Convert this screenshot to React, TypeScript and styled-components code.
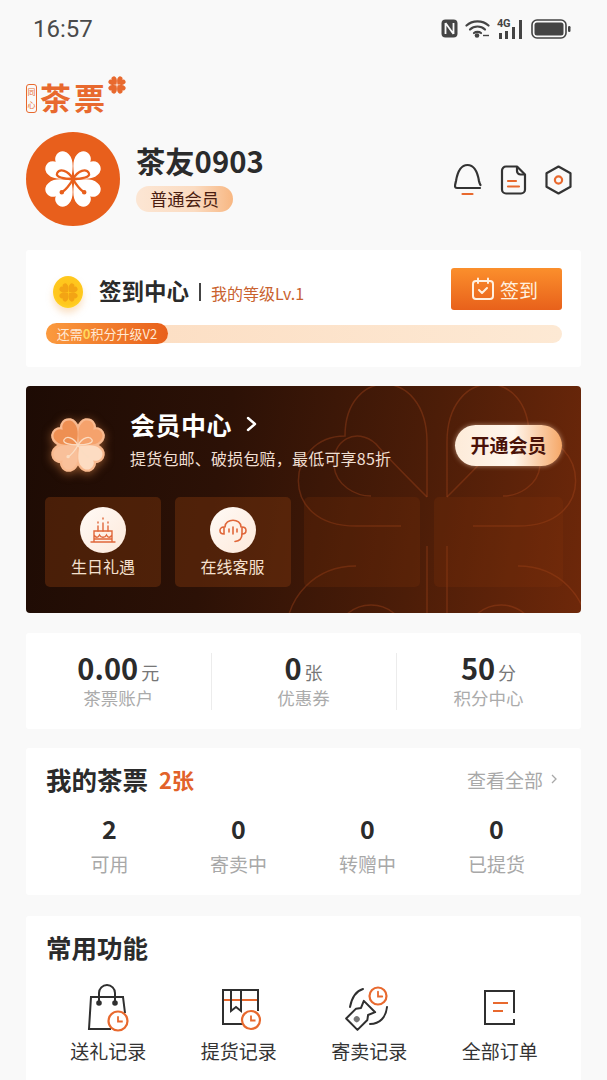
import React from "react";
import styled, { createGlobalStyle } from "styled-components";

const GlobalStyle = createGlobalStyle`
  html, body {
    margin: 0;
    padding: 0;
    background: #f9f9f9;
  }
  #root {
    height: 1080px;
    overflow: hidden;
  }
`;

const Page = styled.div`
  width: 607px;
  height: 1080px;
  overflow: hidden;
  background: #f9f9f9;
  font-family: "Noto Sans CJK SC", "Noto Sans", sans-serif;
  color: #2b2b2b;
`;

const StatusBar = styled.div`
  height: 58px;
  padding: 0 36px 0 33px;
  display: flex;
  align-items: center;
  justify-content: space-between;
`;

const Time = styled.span`
  font-family: Roboto, sans-serif;
  font-size: 24px;
  color: #4a4a4a;
`;

const StatusIcons = styled.div`
  display: flex;
  align-items: center;
  gap: 7px;
  color: #444;
  margin-top: -1px;
`;

const NetLabel = styled.span`
  position: absolute;
  left: 0;
  top: -1px;
  font-family: Roboto, sans-serif;
  font-size: 11px;
  font-weight: 700;
  line-height: 11px;
  letter-spacing: -0.3px;
  color: #444;
`;

const NetBox = styled.div`
  position: relative;
  width: 27px;
  height: 20px;
`;

const Content = styled.div`
  padding: 0 26px;
`;

const LogoRow = styled.div`
  margin-top: 18px;
  height: 38px;
  display: flex;
  align-items: flex-end;
  color: #e8692e;
`;

const LogoSeal = styled.span`
  width: 11px;
  height: 29px;
  margin-bottom: 1px;
  border: 1px solid #e8692e;
  border-radius: 3px;
  box-sizing: border-box;
  font-size: 8px;
  line-height: 13px;
  text-align: center;
  overflow: hidden;
`;

const LogoText = styled.span`
  margin-left: 3px;
  font-size: 31px;
  line-height: 34px;
  font-weight: 700;
  letter-spacing: 3px;
`;

const LogoLeaf = styled.div`
  align-self: flex-start;
  margin-left: 0;
  line-height: 0;
`;

const Profile = styled.div`
  margin-top: 18px;
  height: 94px;
  display: flex;
  align-items: center;
`;

const Avatar = styled.div`
  width: 94px;
  height: 94px;
  border-radius: 50%;
  background: #e85f1c;
  display: flex;
  align-items: center;
  justify-content: center;
  flex-shrink: 0;
`;

const ProfileInfo = styled.div`
  margin-left: 16px;
  padding-bottom: 6.5px;
  display: flex;
  flex-direction: column;
  align-items: flex-start;
  flex: 1;
`;

const UserName = styled.div`
  font-size: 29.3px;
  line-height: 40px;
  font-weight: 700;
  color: #2b2b2b;
`;

const LevelBadge = styled.div`
  margin-top: 6.5px;
  width: 97px;
  height: 26px;
  border-radius: 13px;
  background: linear-gradient(90deg, #fce6d4 0%, #fbdcc2 60%, #f8b782 100%);
  font-size: 17.3px;
  line-height: 26px;
  text-align: center;
  color: #4a1d10;
`;

const ProfileActions = styled.div`
  display: flex;
  align-items: center;
  gap: 18px;
  margin-right: 9px;
  margin-top: 2px;
`;

const Card = styled.section`
  background: #fff;
  border-radius: 3px;
`;

const CheckinCard = styled(Card)`
  margin-top: 24px;
  height: 117px;
  padding: 18px 19px 0 20px;
  box-sizing: border-box;
  position: relative;
`;

const CheckinTop = styled.div`
  display: flex;
  align-items: center;
  height: 42px;
`;

const Coin = styled.div`
  width: 30px;
  height: 32px;
  margin-left: 7px;
  margin-top: 6px;
  border-radius: 50%;
  background: radial-gradient(circle at 50% 45%, #ffc21a 0%, #ffc81e 60%, #ffe13a 100%);
  box-shadow: 0 5px 7px rgba(240, 170, 90, 0.35);
  display: flex;
  align-items: center;
  justify-content: center;
`;

const CheckinTitle = styled.span`
  margin-left: 16px;
  margin-top: 2px;
  font-size: 22.5px;
  font-weight: 700;
  color: #2b2b2b;
`;

const Divider = styled.span`
  width: 2px;
  height: 18px;
  margin: 6px 10px 0;
  background: #444;
`;

const LevelText = styled.span`
  margin-top: 7px;
  font-size: 16px;
  color: #c9622f;
`;

const CheckinButton = styled.button`
  margin-left: auto;
  width: 111px;
  height: 42px;
  border: 0;
  padding: 0 4px 0 0;
  border-radius: 3px;
  background: linear-gradient(180deg, #fb8f2c 0%, #e8611b 100%);
  color: #fff0df;
  font-family: inherit;
  font-size: 19px;
  display: flex;
  align-items: center;
  justify-content: center;
  gap: 5px;
`;

const Progress = styled.div`
  margin-top: 15px;
  height: 18px;
  border-radius: 9px;
  background: linear-gradient(90deg, #fcdcc0 0%, #fde9d4 100%);
  position: relative;
`;

const ProgressFill = styled.div`
  position: absolute;
  left: 0;
  top: -2px;
  width: 122px;
  height: 21px;
  border-radius: 11px;
  background: linear-gradient(90deg, #fb9a3e 0%, #e8601b 100%);
  color: #ffe9d4;
  font-size: 13px;
  line-height: 21px;
  text-align: center;
  white-space: nowrap;
`;

const ProgressNum = styled.b`
  color: #ffd75a;
`;

const MemberCard = styled.section`
  margin-top: 19px;
  height: 227px;
  position: relative;
  overflow: hidden;
  border-radius: 4px;
  background: linear-gradient(100deg, #1d0b04 0%, #2c1106 35%, #4c1d08 70%, #6e280a 100%);
  color: #fff;
`;

const Watermark = styled.svg`
  position: absolute;
  left: 230px;
  top: -30px;
`;

const MemberHead = styled.div`
  position: relative;
  height: 111px;
  display: flex;
  align-items: flex-start;
  padding: 30px 19px 0 24px;
  box-sizing: border-box;
`;

const MemberBadge = styled.div`
  width: 56px;
  height: 58px;
  filter: drop-shadow(0 2px 5px rgba(245, 150, 80, 0.5));
`;

const MemberInfo = styled.div`
  margin-left: 24px;
  flex: 1;
`;

const MemberTitle = styled.div`
  display: flex;
  align-items: center;
  gap: 13px;
  font-size: 25px;
  line-height: 24px;
  font-weight: 700;
  letter-spacing: 0.5px;
  margin-top: -4px;
`;

const MemberDesc = styled.div`
  margin-top: 11px;
  font-size: 16px;
  line-height: 22px;
  letter-spacing: 0.2px;
  white-space: nowrap;
  color: #f0dfd2;
`;

const OpenButton = styled.div`
  position: absolute;
  left: 429px;
  top: 39px;
  width: 107px;
  height: 41px;
  border-radius: 21px;
  background: linear-gradient(90deg, #fdebd9 0%, #fff6ec 55%, #f6a868 100%);
  box-shadow: 0 0 5px rgba(255, 220, 190, 0.55);
  color: #4a1208;
  font-size: 19px;
  font-weight: 700;
  line-height: 40px;
  text-align: center;
`;

const Tiles = styled.div`
  position: relative;
  display: grid;
  grid-template-columns: 116px 116px 116px 129px;
  column-gap: 13.5px;
  padding-left: 19px;
`;

const Tile = styled.div<{ $faded?: boolean }>`
  height: 90px;
  border-radius: 5px;
  background: ${(p) => (p.$faded ? "rgba(140, 55, 10, 0.2)" : "rgba(130, 58, 14, 0.42)")};
  display: flex;
  flex-direction: column;
  align-items: center;
  padding-top: 10px;
  box-sizing: border-box;
`;

const TileIcon = styled.div`
  width: 46px;
  height: 46px;
  border-radius: 50%;
  background: linear-gradient(135deg, #fffaf6, #fde9da);
  display: flex;
  align-items: center;
  justify-content: center;
`;

const TileLabel = styled.div`
  margin-top: 2px;
  font-size: 16px;
  line-height: 22px;
  color: #f5e0cf;
`;

const StatsCard = styled(Card)`
  margin-top: 20px;
  height: 96px;
  display: grid;
  grid-template-columns: 184.5px 185px 185px;
  align-items: center;
`;

const StatCell = styled.div<{ $divided?: boolean }>`
  height: 57px;
  display: flex;
  flex-direction: column;
  align-items: center;
  border-left: ${(p) => (p.$divided ? "1px solid #ececec" : "0")};
  box-sizing: border-box;
`;

const StatValue = styled.div`
  font-size: 29px;
  line-height: 28px;
  font-weight: 700;
  color: #2b2b2b;
`;

const StatUnit = styled.span`
  margin-left: 3px;
  font-size: 18px;
  line-height: 18px;
  font-weight: 400;
  color: #777;
`;

const StatLabel = styled.div`
  margin-top: 5px;
  font-size: 17.5px;
  line-height: 24px;
  color: #ababab;
`;

const TicketCard = styled(Card)`
  margin-top: 19px;
  height: 147px;
  padding: 14px 20px 0;
  box-sizing: border-box;
`;

const CardHead = styled.div`
  display: flex;
  align-items: center;
  height: 34px;
`;

const CardTitle = styled.h2`
  margin: 0;
  font-size: 25.5px;
  font-weight: 700;
  line-height: 34px;
  color: #2b2b2b;
`;

const TicketCount = styled.span`
  margin-left: 11px;
  font-size: 22px;
  font-weight: 700;
  color: #e2622a;
`;

const SeeAll = styled.span`
  margin-left: auto;
  margin-right: 4px;
  font-size: 19px;
  color: #a8a8a8;
  display: flex;
  align-items: center;
  gap: 8px;
`;

const TicketGrid = styled.div`
  margin-top: 16px;
  margin-left: -1px;
  display: grid;
  grid-template-columns: repeat(4, 129px);
`;

const TicketCell = styled.div`
  display: flex;
  flex-direction: column;
  align-items: center;
`;

const TicketNum = styled.div`
  font-size: 25px;
  line-height: 32px;
  font-weight: 700;
  color: #2b2b2b;
`;

const TicketLabel = styled.div`
  margin-top: 7px;
  font-size: 19px;
  line-height: 26px;
  color: #a8a8a8;
`;

const ToolCard = styled(Card)`
  margin-top: 21px;
  height: 190px;
  padding: 14px 20px 0;
  box-sizing: border-box;
`;

const ToolGrid = styled.div`
  margin-top: 19px;
  margin-left: -3px;
  display: grid;
  grid-template-columns: repeat(4, 130.5px);
`;

const ToolCell = styled.div`
  display: flex;
  flex-direction: column;
  align-items: center;
`;

const ToolLabel = styled.div`
  margin-top: 4px;
  font-size: 19px;
  line-height: 28px;
  color: #333;
`;

const HEART = "M0 0C-4-4-22-14-22-28A11.5 11.5 0 0 1 0-34A11.5 11.5 0 0 1 22-28C22-14 4-4 0 0Z";

const ANGLES = [45, 135, 225, 315];

type PetalProps = { fills: string[]; stroke?: string; strokeWidth?: number };

const Petals = ({ fills, stroke, strokeWidth }: PetalProps) => (
  <>
    {ANGLES.map((a, i) => (
      <path
        key={a}
        d={HEART}
        fill={fills[i % fills.length]}
        stroke={stroke}
        strokeWidth={strokeWidth}
        strokeLinejoin="round"
        transform={`translate(50 50) rotate(${a}) translate(0 -3)`}
      />
    ))}
  </>
);

const Bow = ({ color, width }: { color: string; width: number }) => (
  <g fill="none" stroke={color} strokeWidth={width} strokeLinecap="round">
    <path d="M50 50C42 36 30 34 26 41C23 47 36 50 50 50C64 50 77 47 74 41C70 34 58 36 50 50Z" />
    <path d="M50 50C46 58 38 68 33 70M50 50C54 58 62 68 67 70" />
    <circle cx="33" cy="70" r="1.8" fill={color} />
    <circle cx="67" cy="70" r="1.8" fill={color} />
  </g>
);

const AvatarFlower = () => (
  <svg width="58" height="58" viewBox="6 6 88 88">
    <Petals fills={["#fff"]} />
    <Bow color="#e85f1c" width={3.4} />
  </svg>
);

const SmallLeaf = () => (
  <svg width="18" height="18" viewBox="6 6 88 88">
    <Petals fills={["#e8692e"]} />
  </svg>
);

const CoinLeaf = () => (
  <svg width="19" height="19" viewBox="6 6 88 88">
    <Petals fills={["#f3a414"]} />
  </svg>
);

const MemberFlower = () => (
  <svg width="56" height="58" viewBox="2 2 96 96">
    <circle cx="50" cy="50" r="32" fill="#f5a877" />
    <Petals fills={["#f8b98f"]} stroke="#f8b98f" strokeWidth={8} />
    <Petals fills={["#f5a26c", "#fddcc2", "#f9c09a", "#ee8f52"]} />
    <Bow color="#fbdcc2" width={2.2} />
  </svg>
);

const NfcIcon = () => (
  <svg width="17" height="19" viewBox="0 0 17 19">
    <rect x="0.5" y="0.5" width="16" height="18" rx="4" fill="#444" />
    <path d="M4.5 4V15M12.5 4V15M4.5 4L12.5 15" stroke="#f9f9f9" strokeWidth="1.8" fill="none" />
  </svg>
);

const WifiIcon = () => (
  <svg width="25" height="19" viewBox="0 0 25 19">
    <g fill="none" stroke="#444" strokeWidth="2.2" strokeLinecap="round">
      <path d="M1.5 6.5C7.5 1 17.5 1 23.5 6.5" />
      <path d="M5 10.5C9 6.5 16 6.5 20 10.5" />
      <path d="M9 14C10.8 12.5 14.2 12.5 16 14" />
    </g>
    <circle cx="12" cy="16.5" r="2.3" fill="#444" />
    <path d="M18 16.5H24" stroke="#444" strokeWidth="1.4" />
  </svg>
);

const SignalIcon = () => (
  <NetBox>
    <NetLabel>4G</NetLabel>
    <svg width="27" height="20" viewBox="0 0 27 20">
      <g fill="#444">
        <rect x="2" y="14" width="3" height="6" />
        <rect x="8" y="12" width="3" height="8" />
        <rect x="15" y="8" width="3" height="12" />
        <rect x="22" y="1" width="3" height="19" />
      </g>
    </svg>
  </NetBox>
);

const BatteryIcon = () => (
  <svg width="40" height="20" viewBox="0 0 40 20">
    <rect x="1" y="1" width="34" height="18" rx="5" fill="none" stroke="#444" strokeWidth="1.6" />
    <rect x="3.5" y="3.5" width="29" height="13" rx="2.5" fill="#444" />
    <rect x="37" y="7" width="2.5" height="6" rx="1.2" fill="#444" />
  </svg>
);

const BellIcon = () => (
  <svg width="28" height="34" viewBox="0 0 28 34" fill="none">
    <path d="M3 25C0 25 1 22 2 18C3 12 6 2 13.5 2C21 2 24 12 25 18C25.4 20 26 21 26.5 22M26 25H3" stroke="#333" strokeWidth="2.2" strokeLinecap="round" strokeLinejoin="round" />
    <path d="M8.5 31H18.5" stroke="#e8692e" strokeWidth="2.2" strokeLinecap="round" />
  </svg>
);

const DocIcon = () => (
  <svg width="27" height="30" viewBox="0 0 27 30" fill="none">
    <path d="M17 1.5H6A4 4 0 0 0 2 5.5V24.5A4 4 0 0 0 6 28.5H21A4 4 0 0 0 25 24.5V9.5Z" stroke="#333" strokeWidth="2.2" strokeLinejoin="round" />
    <path d="M17 1.5V6A3.5 3.5 0 0 0 20.5 9.5H25" stroke="#333" strokeWidth="2.2" />
    <path d="M8 16H16M8 21.5H19" stroke="#e8692e" strokeWidth="2.2" strokeLinecap="round" />
  </svg>
);

const HexIcon = () => (
  <svg width="27" height="30" viewBox="0 0 27 30" fill="none">
    <path d="M13.5 1.5L25.5 8.3V21.7L13.5 28.5L1.5 21.7V8.3Z" stroke="#333" strokeWidth="2.2" strokeLinejoin="round" />
    <circle cx="13.5" cy="15" r="3.6" stroke="#e8692e" strokeWidth="2.2" />
  </svg>
);

const CalendarIcon = () => (
  <svg width="24" height="24" viewBox="0 0 24 24" fill="none" stroke="#fff0df" strokeWidth="2" strokeLinecap="round" strokeLinejoin="round">
    <rect x="2" y="4" width="20" height="18" rx="3" />
    <path d="M7 1.5V6M17 1.5V6M8 13L11 16L16 11" />
  </svg>
);

const CakeIcon = () => (
  <svg width="26" height="28" viewBox="0 0 26 28" fill="none" stroke="#e0673a" strokeWidth="1.4" strokeLinecap="round">
    <path d="M1 26H25M4 26V15H22V26M4 19C6 22 8 22 9.5 19C11 22 15 22 16.5 19C18 22 20 22 22 19M4 23H22" />
    <path d="M8 15V10M13 15V7M18 15V10M8 7V6M13 3V2M18 7V6" />
  </svg>
);

const HeadsetIcon = () => (
  <svg width="28" height="28" viewBox="0 0 28 28" fill="none" stroke="#e0673a" strokeWidth="1.6" strokeLinecap="round">
    <path d="M6 11C6 2 22 2 22 11" />
    <path d="M5 11C2 11 1 13 1 14.5C1 16 2 18 5 18ZM23 11C26 11 27 13 27 14.5C27 16 26 18 23 18Z" />
    <path d="M23 18C23 23 20 25 16 25.5" />
    <path d="M10 13V16M14 11V18M18 13V16" />
  </svg>
);

const Clock = ({ cx, cy, r }: { cx: number; cy: number; r: number }) => (
  <g fill="#fff" stroke="#e8692e" strokeWidth="2.2">
    <circle cx={cx} cy={cy} r={r} />
    <path d={`M${cx} ${cy - r * 0.5}V${cy + 0.5}H${cx + r * 0.5}`} fill="none" strokeWidth="1.8" />
  </g>
);

const BagIcon = () => (
  <svg width="50" height="50" viewBox="0 0 50 50" fill="none" stroke="#2f2f2f" strokeWidth="2">
    <path d="M42 30L40 14H8L6 46H28" />
    <path d="M16 20V10A8 8 0 0 1 32 10V20" />
    <circle cx="16" cy="20" r="1.8" fill="#2f2f2f" />
    <circle cx="32" cy="20" r="1.8" fill="#2f2f2f" />
    <Clock cx={35} cy={38} r={9.5} />
  </svg>
);

const BoxIcon = () => (
  <svg width="50" height="50" viewBox="0 0 50 50" fill="none" stroke="#2f2f2f" strokeWidth="2">
    <path d="M9 17H44" stroke="#e8692e" />
    <path d="M31 41H9V7H44V28" />
    <path d="M17 7V28L22 24L27 28V7" />
    <Clock cx={37} cy={37} r={9} />
  </svg>
);

const TicketSwapIcon = () => (
  <svg width="50" height="50" viewBox="0 0 50 50" fill="none" stroke="#2f2f2f" strokeWidth="2" strokeLinecap="round">
    <path d="M19 6C12 8 8 14 6 24" />
    <path d="M43 24C42 34 36 41 26 41" />
    <g transform="translate(17 32) rotate(-45)">
      <path d="M-13-8H1L5-5L12-8V8L5 5L1 8H-13Z" strokeLinejoin="round" fill="#fff" />
      <circle cx="-6" cy="0" r="3" fill="#777" stroke="none" />
    </g>
    <Clock cx={34} cy={13} r={8.5} />
  </svg>
);

const OrderIcon = () => (
  <svg width="50" height="50" viewBox="0 0 50 50" fill="none" stroke="#2f2f2f" strokeWidth="2">
    <path d="M39 30V8H10V41H39V36" />
    <path d="M18 20H33M18 28H28" stroke="#e8692e" />
  </svg>
);

const tickets = [
  { num: "2", label: "可用" },
  { num: "0", label: "寄卖中" },
  { num: "0", label: "转赠中" },
  { num: "0", label: "已提货" },
];

const tools = [
  { icon: <BagIcon />, label: "送礼记录" },
  { icon: <BoxIcon />, label: "提货记录" },
  { icon: <TicketSwapIcon />, label: "寄卖记录" },
  { icon: <OrderIcon />, label: "全部订单" },
];

const App = () => {
  return (
    <Page>
      <GlobalStyle />
      <StatusBar>
        <Time>16:57</Time>
        <StatusIcons>
          <NfcIcon />
          <WifiIcon />
          <SignalIcon />
          <BatteryIcon />
        </StatusIcons>
      </StatusBar>
      <Content>
        <LogoRow>
          <LogoSeal>同心</LogoSeal>
          <LogoText>茶票</LogoText>
          <LogoLeaf>
            <SmallLeaf />
          </LogoLeaf>
        </LogoRow>
        <Profile>
          <Avatar>
            <AvatarFlower />
          </Avatar>
          <ProfileInfo>
            <UserName>茶友0903</UserName>
            <LevelBadge>普通会员</LevelBadge>
          </ProfileInfo>
          <ProfileActions>
            <BellIcon />
            <DocIcon />
            <HexIcon />
          </ProfileActions>
        </Profile>
        <CheckinCard>
          <CheckinTop>
            <Coin>
              <CoinLeaf />
            </Coin>
            <CheckinTitle>签到中心</CheckinTitle>
            <Divider />
            <LevelText>我的等级Lv.1</LevelText>
            <CheckinButton>
              <CalendarIcon />
              签到
            </CheckinButton>
          </CheckinTop>
          <Progress>
            <ProgressFill>
              还需<ProgressNum>0</ProgressNum>积分升级V2
            </ProgressFill>
          </Progress>
        </CheckinCard>
        <MemberCard>
          <Watermark width="340" height="300" viewBox="0 0 340 300" fill="none" stroke="#a8481c" strokeOpacity="0.38" strokeWidth="1.5">
            <path d="M171 141V86C171 10 89 10 89 80C30 80 20 170 100 170L145 170" />
            <path d="M191 141V86C191 10 273 10 273 80C332 80 342 170 262 170L217 170" />
            <path d="M171 141C150 120 130 100 120 88C100 70 75 85 78 110C80 130 100 140 115 140" />
            <path d="M191 141C212 120 232 100 242 88C262 70 287 85 284 110C282 130 262 140 247 140" />
            <path d="M171 190V300M191 190V300" />
            <path d="M100 210C60 210 30 240 30 280M262 210C302 210 332 240 332 280" />
            <circle cx="115" cy="285" r="36" />
            <circle cx="245" cy="285" r="36" />
          </Watermark>
          <MemberHead>
            <MemberBadge>
              <MemberFlower />
            </MemberBadge>
            <MemberInfo>
              <MemberTitle>
                会员中心
                <svg width="13" height="16" viewBox="0 0 13 16" fill="none">
                  <path d="M3 2L10 8L3 14" stroke="#fff" strokeWidth="2.4" strokeLinecap="round" strokeLinejoin="round" />
                </svg>
              </MemberTitle>
              <MemberDesc>提货包邮、破损包赔，最低可享85折</MemberDesc>
            </MemberInfo>
            <OpenButton>开通会员</OpenButton>
          </MemberHead>
          <Tiles>
            <Tile>
              <TileIcon>
                <CakeIcon />
              </TileIcon>
              <TileLabel>生日礼遇</TileLabel>
            </Tile>
            <Tile>
              <TileIcon>
                <HeadsetIcon />
              </TileIcon>
              <TileLabel>在线客服</TileLabel>
            </Tile>
            <Tile $faded />
            <Tile $faded />
          </Tiles>
        </MemberCard>
        <StatsCard>
          <StatCell>
            <StatValue>
              0.00<StatUnit>元</StatUnit>
            </StatValue>
            <StatLabel>茶票账户</StatLabel>
          </StatCell>
          <StatCell $divided>
            <StatValue>
              0<StatUnit>张</StatUnit>
            </StatValue>
            <StatLabel>优惠券</StatLabel>
          </StatCell>
          <StatCell $divided>
            <StatValue>
              50<StatUnit>分</StatUnit>
            </StatValue>
            <StatLabel>积分中心</StatLabel>
          </StatCell>
        </StatsCard>
        <TicketCard>
          <CardHead>
            <CardTitle>我的茶票</CardTitle>
            <TicketCount>2张</TicketCount>
            <SeeAll>
              查看全部
              <svg width="6" height="10" viewBox="0 0 6 10" fill="none">
                <path d="M1 1L5 5L1 9" stroke="#a8a8a8" strokeWidth="1.3" />
              </svg>
            </SeeAll>
          </CardHead>
          <TicketGrid>
            {tickets.map((t) => (
              <TicketCell key={t.label}>
                <TicketNum>{t.num}</TicketNum>
                <TicketLabel>{t.label}</TicketLabel>
              </TicketCell>
            ))}
          </TicketGrid>
        </TicketCard>
        <ToolCard>
          <CardHead>
            <CardTitle>常用功能</CardTitle>
          </CardHead>
          <ToolGrid>
            {tools.map((t) => (
              <ToolCell key={t.label}>
                {t.icon}
                <ToolLabel>{t.label}</ToolLabel>
              </ToolCell>
            ))}
          </ToolGrid>
        </ToolCard>
      </Content>
    </Page>
  );
};

export default App;
